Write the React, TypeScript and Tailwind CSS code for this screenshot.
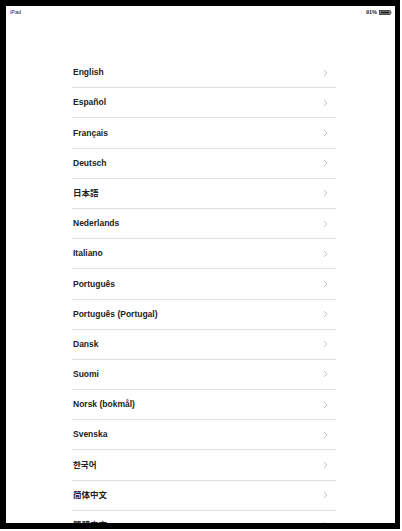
const languages = [
  'English',
  'Español',
  'Français',
  'Deutsch',
  '日本語',
  'Nederlands',
  'Italiano',
  'Português',
  'Português (Portugal)',
  'Dansk',
  'Suomi',
  'Norsk (bokmål)',
  'Svenska',
  '한국어',
  '简体中文',
  '繁體中文',
];

function Chevron() {
  return (
    <svg width="5" height="8" viewBox="0 0 5 8" fill="none" className="shrink-0">
      <path d="M1 1l3 3-3 3" stroke="#c4c4c8" strokeWidth="1" />
    </svg>
  );
}

export default function App() {
  return (
    <div className="w-[402px] h-[531px] bg-white overflow-hidden">
      <div
        className="w-[400px] h-[529px] border-l-[6px] border-t-[6px] border-r-[5px] border-b-[6px] border-black bg-white overflow-hidden flex flex-col"
        style={{ fontFamily: '"Liberation Sans", Arial, "Noto Sans CJK JP", "Noto Sans CJK KR", "Noto Sans CJK SC", sans-serif' }}
      >
        {/* status bar */}
        <div className="h-[13px] shrink-0 flex items-center justify-between pl-[4px] pr-[3px] text-[5.5px] text-[#222]">
          <span>iPad</span>
          <div className="flex items-center gap-[2px]">
            <span className="font-bold">91%</span>
            <svg width="13" height="5" viewBox="0 0 13 5">
              <rect x="0.5" y="0.5" width="10.5" height="4" fill="none" stroke="#222" strokeWidth="0.8" />
              <rect x="1.3" y="1.3" width="9" height="2.4" fill="#222" />
              <rect x="11.4" y="1.6" width="1" height="1.8" fill="#222" />
            </svg>
          </div>
        </div>

        {/* language list */}
        <div className="pt-[39px] pl-[66px] w-[330px] shrink-0">
          {languages.map((lang) => (
            <div
              key={lang}
              className="h-[30.2px] flex items-center justify-between pl-[1px] pr-[8px] border-b border-[#e0e0e0]"
            >
              <span className="text-[8.5px] font-bold text-[#222]">{lang}</span>
              <Chevron />
            </div>
          ))}
        </div>
      </div>
    </div>
  );
}
